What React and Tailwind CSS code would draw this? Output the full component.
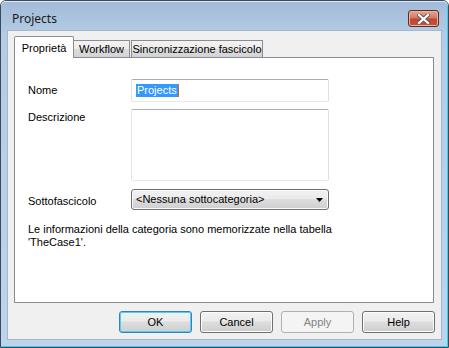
import React from "react";

const font = { fontFamily: '"Liberation Sans", Arial, sans-serif' };

function DlgButton({ label, primary = false, disabled = false }) {
  const base =
    "w-[73px] h-[22px] rounded-[3px] border text-[11px] flex items-center justify-center";
  if (disabled) {
    return (
      <button
        disabled
        className={`${base} border-[#adb2b5] bg-[#f4f4f4] text-[#838383]`}
      >
        {label}
      </button>
    );
  }
  return (
    <button
      className={`${base} ${
        primary
          ? "border-[#3c7fb1] shadow-[inset_0_0_0_1px_#48d2fb]"
          : "border-[#707070] shadow-[inset_0_0_0_1px_#fcfcfc]"
      } bg-[linear-gradient(#f2f2f2_0%,#ebebeb_45%,#dddddd_50%,#cfcfcf_100%)] text-black`}
    >
      {label}
    </button>
  );
}

export default function App() {
  return (
    <div className="w-[449px] h-[348px] bg-white" style={font}>
      {/* WINDOW FRAME */}
      <div className="w-[449px] h-[348px] flex flex-col border border-[#3a4a5c] rounded-t-[6px] bg-[linear-gradient(#a3bbd8_0%,#b5cce6_10%,#bcd4ec_100%)] shadow-[inset_-1px_-1px_0_#2ed6f2]">
        {/* TITLE BAR */}
        <div className="h-[29px] flex items-start justify-between pl-[11px] pr-[9px] shadow-[inset_0_1px_0_#dbe7f4] rounded-t-[5px]">
          <span
            className="mt-[10px] text-[12px] leading-[16px] text-[#1b1b1b]"
            style={{ fontFamily: '"Noto Sans", "Open Sans", sans-serif' }}
          >
            Projects
          </span>
          <div className="mt-[9px] w-[31px] h-[17px] rounded-[3px] border border-[#5e2b22] bg-[linear-gradient(#e5a795_0%,#d57a64_45%,#c2462f_55%,#c4543a_100%)] shadow-[inset_0_0_0_1px_#eab3a4] flex items-center justify-center">
            <svg width="13" height="10" viewBox="0 0 13 10">
              <path
                d="M2 1 L11 9 M11 1 L2 9"
                stroke="#5a5a5a"
                strokeWidth="4"
                strokeLinecap="square"
              />
              <path
                d="M2 1 L11 9 M11 1 L2 9"
                stroke="#ffffff"
                strokeWidth="2.2"
                strokeLinecap="square"
              />
            </svg>
          </div>
        </div>

        {/* CLIENT AREA */}
        <div className="mx-[6px] h-[310px] bg-[#f0f0f0] border border-[#a3b7cd] flex flex-col pt-[6px] pl-[6px] pr-[6px]">
          {/* TABS */}
          <div className="h-[20px] flex items-end text-[11px]">
            <div className="relative z-10 -mb-[1px] h-[22px] w-[60px] bg-white border border-b-0 border-[#898c95] rounded-t-[2px] flex items-start justify-center pt-[3px]">
              Proprietà
            </div>
            <div className="h-[17px] w-[56px] border border-b-0 border-l-0 border-[#898c95] bg-[linear-gradient(#f3f3f3_0%,#ebebeb_50%,#dddddd_51%,#d3d3d3_100%)] flex items-center justify-center">
              Workflow
            </div>
            <div className="h-[17px] w-[132px] ml-[1px] border border-b-0 border-[#898c95] bg-[linear-gradient(#f3f3f3_0%,#ebebeb_50%,#dddddd_51%,#d3d3d3_100%)] flex items-center justify-center">
              Sincronizzazione fascicolo
            </div>
          </div>

          {/* PANEL */}
          <div className="h-[246px] w-[420px] bg-white border border-[#898c95] pt-[21px] pl-[13px] text-[11px] text-black">
            <div className="flex items-center">
              <span className="w-[103px]">Nome</span>
              <div className="w-[198px] h-[23px] border border-[#abadb3] border-l-[#e2e3ea] border-r-[#dbdfe6] border-b-[#e3e9ef] rounded-[2px] flex items-center pl-[4px]">
                <span className="bg-[#3399ff] text-white leading-[13px] px-[1px]">
                  Projects
                </span>
                <span className="w-[1px] h-[13px] bg-[#cc6a10]" />
              </div>
            </div>

            <div className="flex items-start mt-[7px]">
              <span className="w-[103px]">Descrizione</span>
              <div className="w-[198px] h-[72px] border border-[#abadb3] border-l-[#e2e3ea] border-r-[#dbdfe6] border-b-[#e3e9ef] rounded-[2px]" />
            </div>

            <div className="flex items-center mt-[8px]">
              <span className="w-[103px] pt-[4px]">Sottofascicolo</span>
              <div className="w-[198px] h-[21px] border border-[#707070] rounded-[3px] bg-[linear-gradient(#f2f2f2_0%,#ebebeb_45%,#dddddd_50%,#cfcfcf_100%)] shadow-[inset_0_0_0_1px_#fafafa] flex items-center justify-between pl-[4px] pr-[5px]">
                <span>&lt;Nessuna sottocategoria&gt;</span>
                <svg width="7" height="4" viewBox="0 0 7 4">
                  <path d="M0 0 H7 L3.5 4 Z" fill="#000" />
                </svg>
              </div>
            </div>

            <p className="mt-[13px] leading-[13px]">
              Le informazioni della categoria sono memorizzate nella tabella
              <br />
              'TheCase1'.
            </p>
          </div>

          {/* FOOTER BUTTONS */}
          <div className="mt-[8px] flex justify-end gap-[8px]">
            <DlgButton label="OK" primary />
            <DlgButton label="Cancel" />
            <DlgButton label="Apply" disabled />
            <DlgButton label="Help" />
          </div>
        </div>
      </div>
    </div>
  );
}
